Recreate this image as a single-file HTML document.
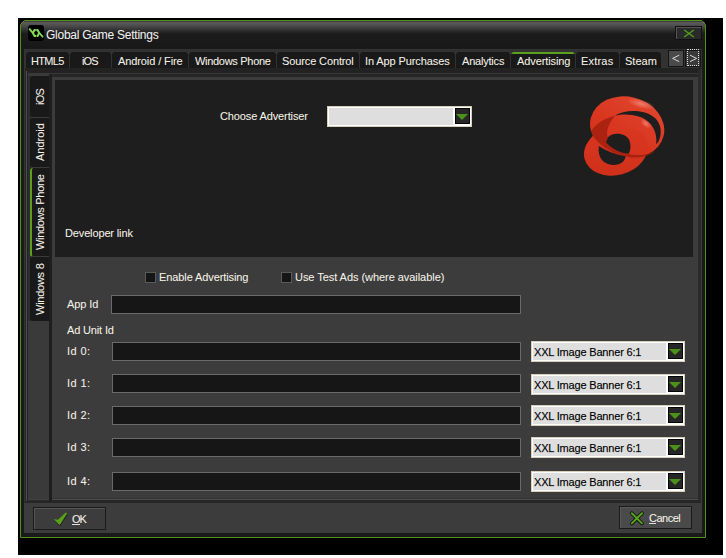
<!DOCTYPE html>
<html><head><meta charset="utf-8">
<style>
html,body{margin:0;padding:0;}
body{width:726px;height:558px;background:#fff;position:relative;overflow:hidden;font-family:"Liberation Sans",sans-serif;font-size:11px;color:#f6f3e8;-webkit-text-stroke:0.1px rgba(246,243,232,0.5);}
.a{position:absolute;box-sizing:border-box;}
.t{position:absolute;white-space:nowrap;line-height:13px;}
.tab{position:absolute;box-sizing:border-box;top:52px;height:16px;background:#191919;clip-path:polygon(2px 0,calc(100% - 2px) 0,100% 2px,100% 100%,0 100%,0 2px);}
.tabt{position:absolute;top:55px;white-space:nowrap;line-height:13px;font-size:11px;}
.vtab{position:absolute;box-sizing:border-box;left:30px;width:19px;background:#191919;border-bottom:1px solid #3a3a3a;border-radius:3px 0 0 3px;}
.vt{position:absolute;white-space:nowrap;transform-origin:0 0;transform:rotate(-90deg);line-height:13px;}
.inp{position:absolute;box-sizing:border-box;left:111px;width:410px;height:19px;background:#161616;border:1px solid #6a6a6a;}
.dd{position:absolute;box-sizing:border-box;left:531px;width:154px;height:21px;background:#fff;border:1px solid #d4d0ba;}
.ddg{position:absolute;left:1px;top:1px;width:133px;height:17px;background:#dedede;}
.ddb{position:absolute;box-sizing:border-box;left:136px;top:1px;width:15px;height:16px;background:#262626;border:1px solid #050505;}
.ddb:after{content:"";position:absolute;left:0px;top:5px;border-left:6px solid transparent;border-right:6px solid transparent;border-top:6px solid #4c921a;}
.lbl{position:absolute;left:67px;white-space:nowrap;line-height:13px;}
.ddt{position:absolute;left:2px;top:4px;letter-spacing:-0.18px;color:#000;-webkit-text-stroke:0.25px rgba(0,0,0,0.6);white-space:nowrap;line-height:13px;}
</style></head><body>
<!-- black frame -->
<div class="a" style="left:18px;top:18px;width:705px;height:537px;background:#000"></div>
<!-- window fill -->
<div class="a" style="left:21px;top:21px;width:684px;height:516px;background:#1a1a1a"></div>
<!-- title gradient -->
<div class="a" style="left:21px;top:21px;width:684px;height:27px;background:linear-gradient(#2e2e2e 0px,#5a5a5a 1.5px,#505050 4px,#3e3e3e 7px,#2a2a2a 10px,#1c1c1c 13px,#181818 27px)"></div>
<!-- green border -->
<svg class="a" style="left:0;top:0" width="726" height="558"><path d="M24.5 20.5 H701.5 L705.5 24.5 V537.5 H20.5 V24.5 Z" fill="none" stroke="#52921a" stroke-width="1"/><path d="M20 20 h4 l-4 4z M706 20 h-4 l4 4z" fill="#000"/></svg>
<!-- title icon -->
<div class="a" style="left:28px;top:25px;width:16px;height:16px;background:#000;border-radius:3px"></div>
<svg class="a" style="left:28px;top:25px" width="16" height="16" viewBox="0 0 16 16"><g fill="none" stroke="#84dc50" stroke-linejoin="round"><path d="M1.6 4.2 L5 8.2" stroke-width="1.9" stroke-linecap="round"/><path d="M11 7.6 L14.6 11.6" stroke-width="1.7" stroke-linecap="round"/><path d="M4.9 8 L6.5 5.1 L9.6 5.1 L11.2 8 L9.6 10.9 L6.5 10.9 Z" stroke-width="2"/></g><rect x="7.7" y="3.6" width="0.7" height="2.2" fill="#000" opacity="0.8"/><rect x="8.3" y="10.2" width="0.7" height="2.2" fill="#000" opacity="0.8"/></svg>
<div class="t" style="left:46px;top:29px;font-size:12px;letter-spacing:-0.25px;color:#f0f0f0">Global Game Settings</div>
<!-- close button -->
<div class="a" style="left:675px;top:26px;width:27px;height:14px;background:#2a2a2a;border:1px solid #111;box-shadow:inset 1px 1px 0 #555"></div>
<svg class="a" style="left:683px;top:29px" width="12" height="9"><path d="M1.2 1 L10.8 8 M10.8 1 L1.2 8" stroke="#52a01c" stroke-width="1.4"/></svg>

<!-- tab strip band -->
<div class="a" style="left:24px;top:49px;width:678px;height:19px;background:#323232"></div>
<div class="a" style="left:24px;top:49px;width:2px;height:19px;background:#333"></div>
<!-- tabs -->
<div class="tab" style="left:26px;width:43px"></div>
<div class="tab" style="left:70px;width:41px"></div>
<div class="tab" style="left:112px;width:76px"></div>
<div class="tab" style="left:189px;width:87px"></div>
<div class="tab" style="left:277px;width:82px"></div>
<div class="tab" style="left:360px;width:95px"></div>
<div class="tab" style="left:456px;width:54px"></div>
<div class="tab" style="left:511px;width:64px"><div style="position:absolute;left:0;top:0;width:100%;height:2px;background:#5aa01e"></div></div>
<div class="tab" style="left:576px;width:43px"></div>
<div class="tab" style="left:620px;width:41px"></div>
<div class="tabt" style="left:31px;letter-spacing:-0.7px">HTML5</div>
<div class="tabt" style="left:82px;letter-spacing:-0.9px">iOS</div>
<div class="tabt" style="left:118px;letter-spacing:-0.1px">Android / Fire</div>
<div class="tabt" style="left:195px;letter-spacing:-0.3px">Windows Phone</div>
<div class="tabt" style="left:282px;letter-spacing:-0.12px">Source Control</div>
<div class="tabt" style="left:365px;letter-spacing:-0.1px">In App Purchases</div>
<div class="tabt" style="left:462px;letter-spacing:-0.2px">Analytics</div>
<div class="tabt" style="left:517px;letter-spacing:-0.1px">Advertising</div>
<div class="tabt" style="left:581px;letter-spacing:0.2px">Extras</div>
<div class="tabt" style="left:625px">Steam</div>
<!-- arrows -->
<div class="a" style="left:668px;top:50px;width:16px;height:17px;background:#151515"></div>
<div class="a" style="left:669px;top:51px;width:14px;height:15px;background:#4a4a4a"></div>
<div class="a" style="left:685px;top:50px;width:16px;height:17px;background:#151515"></div>
<div class="a" style="left:686px;top:51px;width:14px;height:15px;background:#3a3a3a"></div>
<div class="a" style="left:687px;top:49px;width:12px;height:17px;border:1px dotted #e0e0e0"></div>
<svg class="a" style="left:668px;top:50px" width="34" height="17"><path d="M11.2 5.2 L4.6 8.4 L11.2 11.6 M22 5.2 L28.6 8.4 L22 11.6" fill="none" stroke="#d8d8d8" stroke-width="1"/></svg>


<!-- tab control body -->
<div class="a" style="left:24px;top:68px;width:678px;height:435px;background:#222"></div>
<div class="a" style="left:24px;top:68px;width:1px;height:435px;background:#333"></div>
<div class="a" style="left:25px;top:68px;width:1px;height:435px;background:#262626"></div>
<div class="a" style="left:26px;top:71px;width:1px;height:430px;background:#4e4e4e"></div>
<div class="a" style="left:701px;top:69px;width:1px;height:434px;background:#3a3a3a"></div>
<div class="a" style="left:25px;top:501px;width:676px;height:2px;background:#262626"></div>
<!-- vertical tab control -->
<div class="a" style="left:28px;top:73px;width:21px;height:427px;background:#3a3a3a"></div>
<div class="a" style="left:28px;top:76px;width:21px;height:245px;background:#2e2e2e"></div>
<div class="a" style="left:28px;top:499px;width:21px;height:1px;background:#404040"></div>
<div class="a" style="left:28px;top:500px;width:21px;height:1px;background:#2a2a2a"></div>
<div class="vtab" style="top:76px;height:42px"></div>
<div class="vtab" style="top:118px;height:50px"></div>
<div class="vtab" style="top:168px;height:89px;border-left:2px solid #5aa01e"></div>
<div class="vtab" style="top:257px;height:64px;border-bottom:none"></div>
<div class="vt" style="left:34px;top:105px;letter-spacing:-0.8px">iOS</div>
<div class="vt" style="left:34px;top:161px">Android</div>
<div class="vt" style="left:34px;top:250px;letter-spacing:-0.3px">Windows Phone</div>
<div class="vt" style="left:34px;top:315px;letter-spacing:-0.25px">Windows 8</div>
<div class="a" style="left:49px;top:74px;width:3px;height:427px;background:#1e1e1e"></div>
<!-- content panel -->
<div class="a" style="left:49px;top:73px;width:650px;height:1px;background:#383838"></div>
<div class="a" style="left:52px;top:74px;width:646px;height:3px;background:#262626"></div>
<div class="a" style="left:52px;top:77px;width:646px;height:421px;background:#3c3c3c"></div>
<div class="a" style="left:52px;top:498px;width:646px;height:1px;background:#333"></div>
<div class="a" style="left:52px;top:499px;width:646px;height:1px;background:#4e4e4e"></div>
<div class="a" style="left:52px;top:500px;width:646px;height:1px;background:#262626"></div>
<div class="a" style="left:55px;top:80px;width:638px;height:177px;background:#1e1e1e"></div>
<div class="a" style="left:698px;top:70px;width:3px;height:431px;background:#2a2a2a"></div>

<div class="t" style="left:220px;top:110px;letter-spacing:-0.12px">Choose Advertiser</div>
<div class="dd" style="left:327px;top:106px;width:145px"><div class="ddg" style="width:124px"></div><div class="ddb" style="left:127px"></div></div>

<!-- logo -->
<svg class="a" style="left:578px;top:92px" width="90" height="88" viewBox="0 0 571 558">
<defs>
<linearGradient id="g1" gradientUnits="userSpaceOnUse" x1="380" y1="30" x2="200" y2="530"><stop offset="0" stop-color="#e0442c"/><stop offset="0.45" stop-color="#d93620"/><stop offset="1" stop-color="#d0301a"/></linearGradient>
<radialGradient id="h1" cx="0.5" cy="0.5" r="0.5"><stop offset="0" stop-color="#f59080" stop-opacity="0.75"/><stop offset="1" stop-color="#f59080" stop-opacity="0"/></radialGradient>
</defs>
<g fill="url(#g1)">
<ellipse cx="312" cy="222" rx="238" ry="192" transform="rotate(14 312 222)"/>
<ellipse cx="240" cy="372" rx="205" ry="155" transform="rotate(-15 240 372)"/>
</g>
<ellipse cx="400" cy="75" rx="90" ry="28" transform="rotate(15 400 75)" fill="url(#h1)"/>
<ellipse cx="430" cy="200" rx="40" ry="22" transform="rotate(40 430 200)" fill="url(#h1)"/>
<path fill="#9c1c0c" d="M82 250 C120 190 175 165 235 150 C205 185 180 230 185 275 C200 330 260 380 325 395 C400 410 470 390 492 368 C470 400 400 425 320 412 C240 400 170 360 130 320 C105 295 88 270 82 250 Z" opacity="0.75"/>
<g fill="#1e1e1e">
<path d="M232 150 C300 108 430 108 492 168 C545 222 525 310 496 332 C505 262 475 195 405 162 C345 138 280 138 232 150 Z"/>
<path d="M192 285 C222 255 295 258 322 300 C338 330 335 368 322 392 C262 385 205 352 178 318 Z"/>
<path d="M132 342 C180 375 240 395 302 408 C298 440 268 465 222 463 C165 460 122 420 132 342 Z"/>
</g>
</svg>

<div class="t" style="left:65px;top:227px;letter-spacing:-0.14px">Developer link</div>

<!-- checkboxes -->
<div class="a" style="left:145px;top:272px;width:11px;height:11px;background:#151515;border:1px solid #5a5a5a"></div>
<div class="t" style="left:159px;top:271px;letter-spacing:-0.1px">Enable Advertising</div>
<div class="a" style="left:281px;top:272px;width:11px;height:11px;background:#151515;border:1px solid #5a5a5a"></div>
<div class="t" style="left:295px;top:271px;letter-spacing:-0.05px">Use Test Ads (where available)</div>

<div class="lbl" style="top:298px;letter-spacing:-0.1px">App Id</div>
<div class="inp" style="top:295px"></div>
<div class="lbl" style="top:324px;letter-spacing:-0.15px">Ad Unit Id</div>

<div class="lbl" style="top:345px;letter-spacing:0.4px">Id 0:</div>
<div class="inp" style="top:342px;left:112px;width:409px"></div>
<div class="dd" style="top:341px"><div class="ddg"></div><div class="ddt">XXL Image Banner 6:1</div><div class="ddb"></div></div>
<div class="lbl" style="top:377px;letter-spacing:0.4px">Id 1:</div>
<div class="inp" style="top:374px;left:112px;width:409px"></div>
<div class="dd" style="top:374px"><div class="ddg"></div><div class="ddt">XXL Image Banner 6:1</div><div class="ddb"></div></div>
<div class="lbl" style="top:409px;letter-spacing:0.4px">Id 2:</div>
<div class="inp" style="top:406px;left:112px;width:409px"></div>
<div class="dd" style="top:405px"><div class="ddg"></div><div class="ddt">XXL Image Banner 6:1</div><div class="ddb"></div></div>
<div class="lbl" style="top:441px;letter-spacing:0.4px">Id 3:</div>
<div class="inp" style="top:438px;left:112px;width:409px"></div>
<div class="dd" style="top:437px"><div class="ddg"></div><div class="ddt">XXL Image Banner 6:1</div><div class="ddb"></div></div>
<div class="lbl" style="top:475px;letter-spacing:0.4px">Id 4:</div>
<div class="inp" style="top:472px;left:112px;width:409px"></div>
<div class="dd" style="top:471px"><div class="ddg"></div><div class="ddt">XXL Image Banner 6:1</div><div class="ddb"></div></div>

<!-- bottom area -->
<div class="a" style="left:24px;top:503px;width:678px;height:30px;background:#3c3c3c"></div>
<div class="a" style="left:33px;top:507px;width:73px;height:23px;background:#3c3c3c;border:1px solid #1a1a1a;box-shadow:inset 1px 1px 0 #555"></div>
<svg class="a" style="left:0;top:0" width="726" height="558" viewBox="0 0 726 558"><path d="M54.2 520.2 L58.6 520.6 L66 513.6 L67.6 514.6 L60.2 525.8 L59.4 525.6 Z" fill="#111" opacity="0.8"/><path d="M53.6 519.3 L58.1 519.8 L65.7 512.6 L67.2 513.4 L59.8 524.9 L59.1 524.6 Z" fill="#5aa01a"/></svg>
<div class="t" style="left:72px;top:513px;letter-spacing:-1px">OK</div>
<div class="a" style="left:72px;top:524px;width:8px;height:1px;background:#ddd"></div>
<div class="a" style="left:619px;top:506px;width:73px;height:23px;background:#4a4a4a;border:1px solid #1a1a1a;box-shadow:inset 1px 1px 0 #5a5a5a"></div>
<svg class="a" style="left:0;top:0" width="726" height="558"><path d="M631.8 513.2 L642 523.4 M642 513.2 L631.8 523.4" stroke="#0c0c0c" stroke-width="3.6" stroke-linecap="round"/><path d="M631.8 513.2 L642 523.4 M642 513.2 L631.8 523.4" stroke="#5aa81a" stroke-width="2" stroke-linecap="round"/></svg>
<div class="t" style="left:649px;top:512px;letter-spacing:-0.5px">Cancel</div>
<div class="a" style="left:649px;top:523px;width:7px;height:1px;background:#ddd"></div>
</body></html>
